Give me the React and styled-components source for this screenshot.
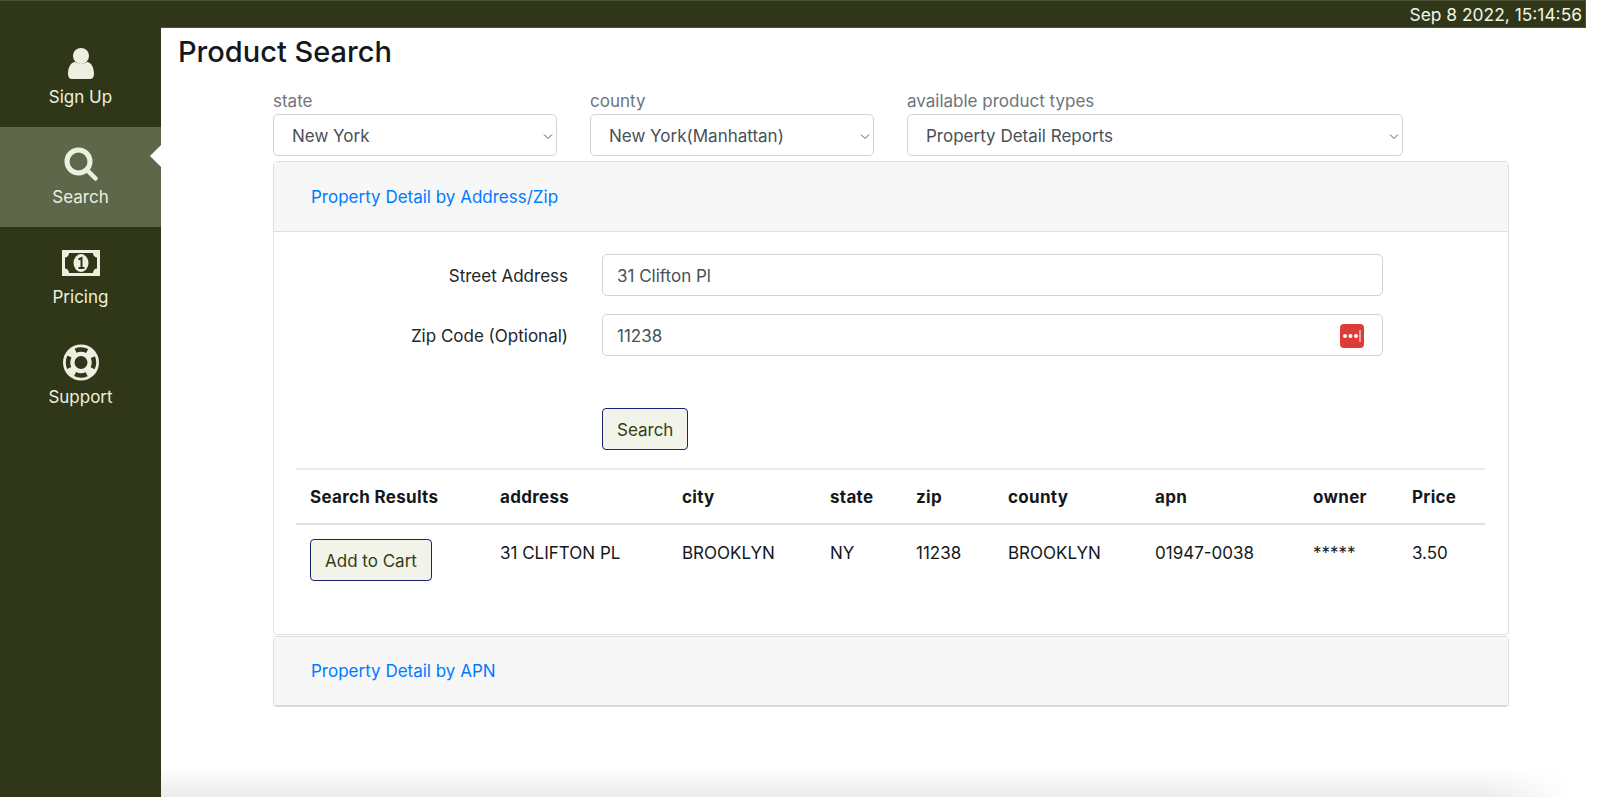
import styled, { createGlobalStyle } from "styled-components"

const Global = createGlobalStyle`
  html, body { margin: 0; padding: 0; background: #fff; height: 100%; overflow: hidden; }
  * { box-sizing: border-box; }
  body { font-family: Inter, "Noto Sans", sans-serif; font-size: 17px; line-height: 24px; color: #212529; }
`

const Page = styled.div`
  position: relative;
  height: 797px;
  width: 1600px;
  overflow: hidden;
  display: flex;
  flex-direction: column;
`
const TopBar = styled.div`
  height: 28px;
  width: 1586px;
  flex: none;
  background: #2f3718;
  border: 1px solid #4a5230;
  border-width: 1px 1px 1px 0;
  color: #f1f3e6;
  font-size: 17.4px;
  line-height: 28px;
  text-align: right;
  padding-right: 3px;
`
const Body = styled.div`
  flex: 1;
  display: flex;
  min-height: 0;
`
const Sidebar = styled.nav`
  width: 161px;
  flex: none;
  margin-top: -1px;
  background: #2f3718;
`
const NavItem = styled.div`
  position: relative;
  height: 100px;
  display: flex;
  flex-direction: column;
  align-items: center;
  padding-top: ${p => p.$top}px;
  gap: ${p => p.$gap}px;
  color: #eef0df;
  line-height: 24px;
  background: ${p => (p.$active ? "#5f674a" : "transparent")};
  svg { display: block; flex: none; }
  ${p => p.$active && `
    &::after {
      content: "";
      position: absolute;
      right: 0;
      top: 18px;
      border: 11px solid transparent;
      border-left: 0;
      border-right: 11px solid #fff;
    }
  `}
`
const Main = styled.main`
  flex: 1;
  min-width: 0;
  padding: 0 0 0 17px;
`
const Title = styled.h1`
  margin: 0;
  padding-top: 1px;
  height: 46px;
  font-size: 29px;
  font-weight: 500;
  line-height: 46px;
  color: #14181d;
`
const Content = styled.div`
  margin-left: 95px;
  width: 1236px;
  padding-top: 15px;
`
const SelectRow = styled.div`
  display: flex;
  gap: 33px;
`
const SelectField = styled.div`
  width: ${p => p.$w}px;
`
const SelectLabel = styled.div`
  color: #6c757d;
  height: 25px;
  line-height: 24px;
`
const SelectBox = styled.div`
  height: 42px;
  border: 1px solid #ced4da;
  border-radius: 5px;
  padding: 1px 2px 0 18px;
  display: flex;
  align-items: center;
  justify-content: space-between;
  color: #495057;
`
const Card = styled.section`
  border: 1px solid #dfdfdf;
  border-radius: 4px;
  margin-top: ${p => p.$mt}px;
  background: #fff;
  ${p => p.$closed && "border-bottom: 2px solid #d9d9d9;"}
`
const CardHead = styled.div`
  height: ${p => p.$h}px;
  background: #f7f7f7;
  padding-left: 37px;
  display: flex;
  align-items: center;
  color: #007bff;
  border-bottom: ${p => (p.$open ? "1px solid #dfdfdf" : "0")};
`
const CardBody = styled.div`
  padding: 22px 22px 0;
  height: 402px;
`
const FormRow = styled.div`
  display: flex;
  align-items: center;
  margin-bottom: 18px;
`
const FormLabel = styled.label`
  width: 278px;
  flex: none;
  text-align: right;
  padding: 1px 6px 0 0;
  color: #212529;
`
const InputBox = styled.div`
  margin-left: 28px;
  width: 781px;
  height: 42px;
  border: 1px solid #ced4da;
  border-radius: 5px;
  padding: 1px 18px 0 14px;
  display: flex;
  align-items: center;
  justify-content: space-between;
  color: #495057;
`
const KeyBadge = styled.span`
  width: 24px;
  height: 24px;
  border-radius: 4px;
  background: #dc3c37;
  display: flex;
  align-items: center;
  justify-content: center;
`
const ButtonRow = styled.div`
  margin: 52px 0 18px 306px;
`
const ActionButton = styled.button`
  display: block;
  height: 42px;
  padding: 1px 14px 0;
  font: inherit;
  color: #333d16;
  background: #f2f3e9;
  border: 1px solid #1c2270;
  border-radius: 4px;
`
const ResultTable = styled.table`
  width: 1189px;
  table-layout: fixed;
  border-collapse: collapse;
  color: #15181b;
  th {
    text-align: left;
    font-weight: 700;
    letter-spacing: 0.3px;
    height: 55px;
    padding: 0 14px;
    border-top: 2px solid #e9ecef;
    border-bottom: 2px solid #dee2e6;
  }
  td {
    padding: 16px 14px 14px;
    vertical-align: top;
  }
  td:first-child {
    padding-top: 14px;
  }
`
const BottomShade = styled.div`
  position: absolute;
  left: 161px;
  right: 0;
  bottom: 0;
  height: 30px;
  background: linear-gradient(to bottom, rgba(235,235,235,0), rgba(235,235,235,1));
  -webkit-mask-image: linear-gradient(to right, #000 92%, transparent 98%);
  pointer-events: none;
`

const columns = [
  ["Search Results", 190],
  ["address", 182],
  ["city", 148],
  ["state", 86],
  ["zip", 92],
  ["county", 147],
  ["apn", 158],
  ["owner", 99],
  ["Price", 87],
]
const row = ["31 CLIFTON PL", "BROOKLYN", "NY", "11238", "BROOKLYN", "01947-0038", "*****", "3.50"]

function Chevron() {
  return (
    <svg width="12" height="12" viewBox="0 0 12 12" fill="none" stroke="#555b62" strokeWidth="1">
      <path d="M2 4.500 6 8.500 10 4.500" />
    </svg>
  )
}

function PersonIcon() {
  return (
    <svg width="26" height="31" viewBox="0 0 26 31" fill="#eef0df">
      <circle cx="13" cy="8" r="8" />
      <path d="M0 26c0-7 3-12 7-12 1.500 1 3.500 1.500 6 1.500s4.500-.5 6-1.500c4 0 7 5 7 12 0 3-1.500 5-4 5H4c-2.500 0-4-2-4-5z" />
    </svg>
  )
}
function SearchIcon() {
  return (
    <svg width="34" height="34" viewBox="0 0 34 34" fill="none" stroke="#eef0df" strokeLinecap="round">
      <circle cx="14.500" cy="14.500" r="11.500" strokeWidth="5" />
      <path d="M23 23 31.500 31.500" strokeWidth="4.500" />
    </svg>
  )
}
function BillIcon() {
  return (
    <svg width="38" height="26" viewBox="0 0 38 26">
      <rect width="38" height="26" fill="#eef0df" />
      <path d="M7 3h24c0 2.500 2 4.500 4 4.500v11c-2 0-4 2-4 4.500H7c0-2.500-2-4.500-4-4.500v-11c2 0 4-2 4-4.500z" fill="#2f3718" />
      <ellipse cx="19" cy="13" rx="7.500" ry="9" fill="#eef0df" />
      <path d="M16.500 9.500 19.500 8v10M16.500 18h6" fill="none" stroke="#2f3718" strokeWidth="2" />
    </svg>
  )
}
function RingIcon() {
  return (
    <svg width="36" height="37" viewBox="0 0 36 36">
      <circle cx="18" cy="18" r="18" fill="#eef0df" />
      <circle cx="18" cy="18" r="13" fill="none" stroke="#2f3718" strokeWidth="4.500" strokeDasharray="12 8.420" strokeDashoffset="6" />
      <circle cx="18" cy="18" r="6.500" fill="#2f3718" />
    </svg>
  )
}
function DotsIcon() {
  return (
    <svg width="20" height="12" viewBox="0 0 20 12" fill="#fff">
      <circle cx="3" cy="6" r="2" />
      <circle cx="8.500" cy="6" r="2" />
      <circle cx="14" cy="6" r="2" />
      <rect x="17.500" y="0" width="1" height="12" />
    </svg>
  )
}

export default function App() {
  return (
    <Page>
      <Global />
      <TopBar>Sep 8 2022, 15:14:56</TopBar>
      <Body>
        <Sidebar>
          <NavItem $top={21} $gap={6}><PersonIcon />Sign Up</NavItem>
          <NavItem $top={20} $gap={4} $active><SearchIcon />Search</NavItem>
          <NavItem $top={23} $gap={9}><BillIcon />Pricing</NavItem>
          <NavItem $top={17} $gap={4}><RingIcon />Support</NavItem>
        </Sidebar>
        <Main>
          <Title>Product Search</Title>
          <Content>
            <SelectRow>
              <SelectField $w={284}>
                <SelectLabel>state</SelectLabel>
                <SelectBox>New York<Chevron /></SelectBox>
              </SelectField>
              <SelectField $w={284}>
                <SelectLabel>county</SelectLabel>
                <SelectBox>New York(Manhattan)<Chevron /></SelectBox>
              </SelectField>
              <SelectField $w={496}>
                <SelectLabel>available product types</SelectLabel>
                <SelectBox>Property Detail Reports<Chevron /></SelectBox>
              </SelectField>
            </SelectRow>
            <Card $mt={5}>
              <CardHead $h={70} $open>Property Detail by Address/Zip</CardHead>
              <CardBody>
                <FormRow>
                  <FormLabel>Street Address</FormLabel>
                  <InputBox>31 Clifton Pl</InputBox>
                </FormRow>
                <FormRow>
                  <FormLabel>Zip Code (Optional)</FormLabel>
                  <InputBox>11238<KeyBadge><DotsIcon /></KeyBadge></InputBox>
                </FormRow>
                <ButtonRow>
                  <ActionButton>Search</ActionButton>
                </ButtonRow>
                <ResultTable>
                  <colgroup>
                    {columns.map(([name, w]) => <col key={name} style={{ width: w }} />)}
                  </colgroup>
                  <thead>
                    <tr>{columns.map(([name]) => <th key={name}>{name}</th>)}</tr>
                  </thead>
                  <tbody>
                    <tr>
                      <td><ActionButton>Add to Cart</ActionButton></td>
                      {row.map((v, i) => <td key={i}>{v}</td>)}
                    </tr>
                  </tbody>
                </ResultTable>
              </CardBody>
            </Card>
            <Card $mt={1} $closed>
              <CardHead $h={68}>Property Detail by APN</CardHead>
            </Card>
          </Content>
        </Main>
      </Body>
      <BottomShade />
    </Page>
  )
}
